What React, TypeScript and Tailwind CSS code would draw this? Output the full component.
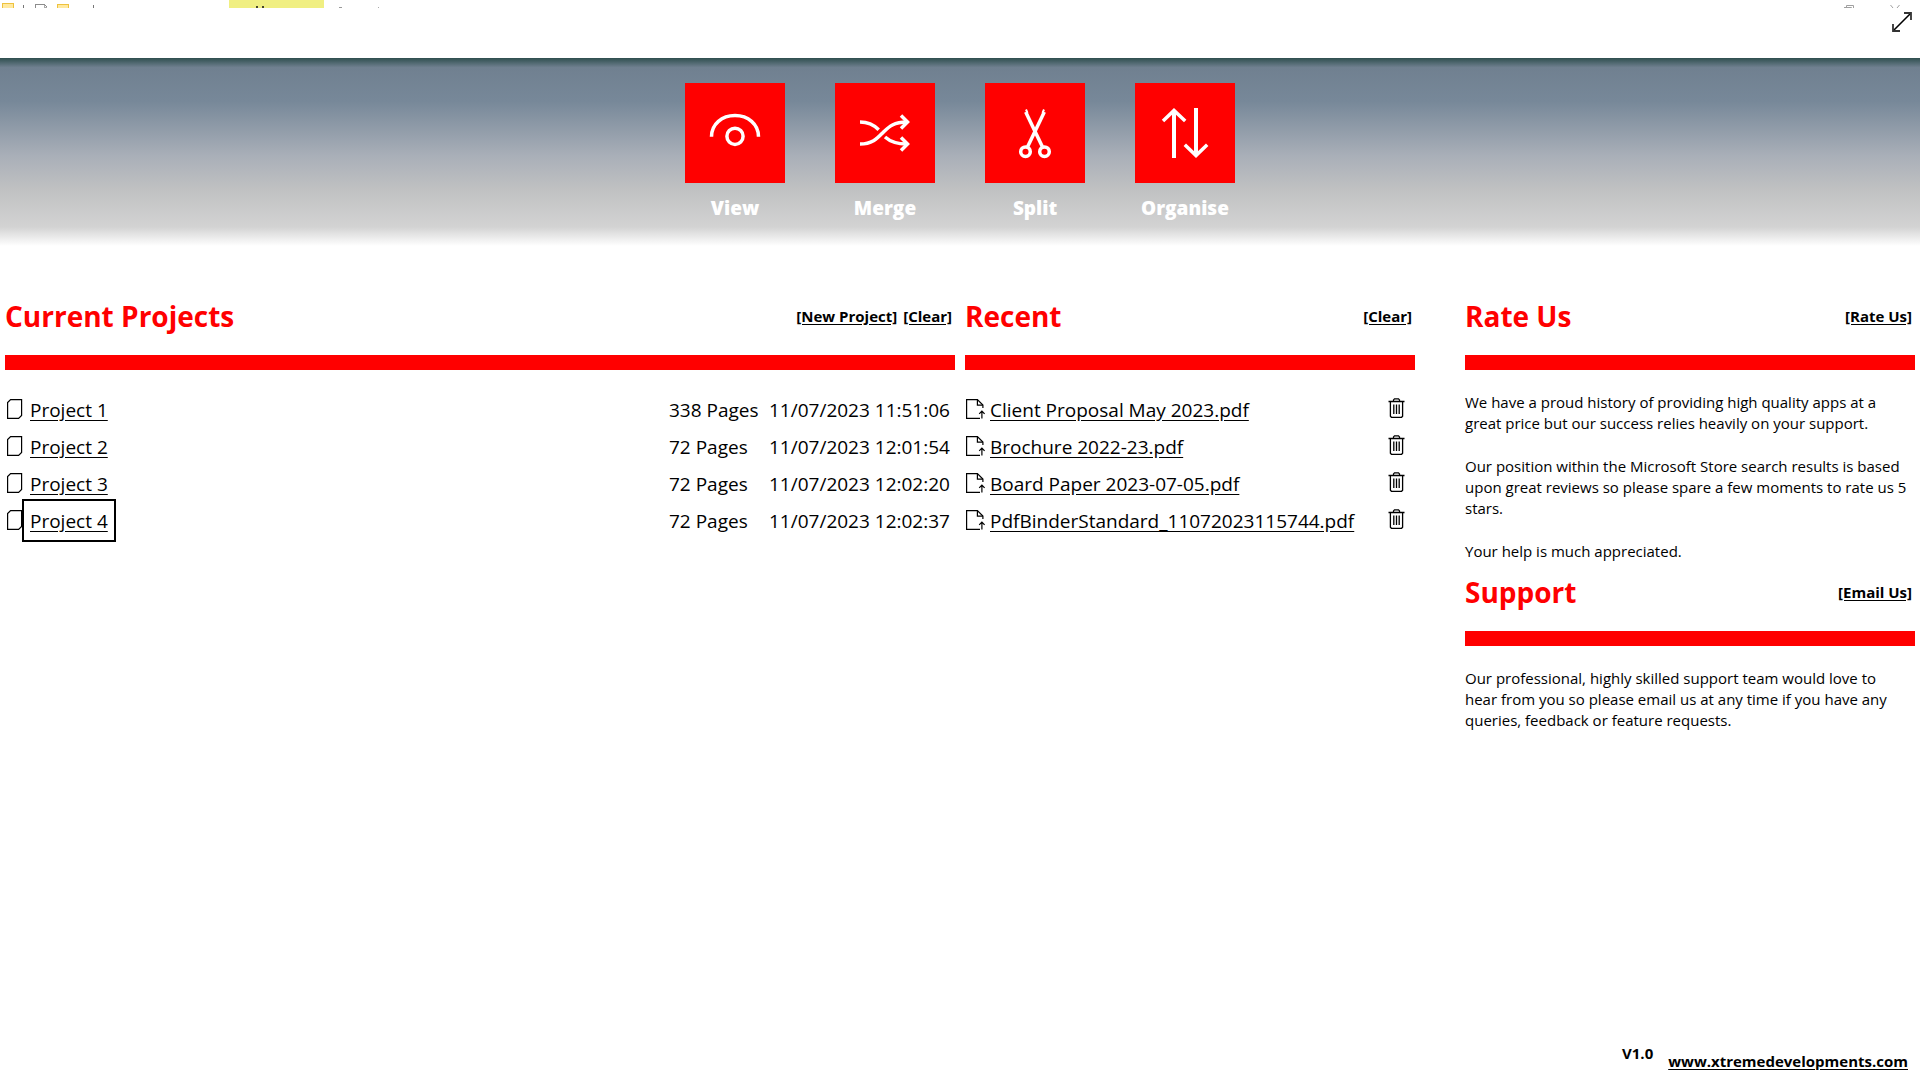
import type { ReactNode } from 'react';

const projects = [
  { name: 'Project 1', pages: 338, date: '11/07/2023 11:51:06' },
  { name: 'Project 2', pages: 72, date: '11/07/2023 12:01:54' },
  { name: 'Project 3', pages: 72, date: '11/07/2023 12:02:20' },
  { name: 'Project 4', pages: 72, date: '11/07/2023 12:02:37' },
];

const recentFiles = [
  'Client Proposal May 2023.pdf',
  'Brochure 2022-23.pdf',
  'Board Paper 2023-07-05.pdf',
  'PdfBinderStandard_11072023115744.pdf',
];

const tools = [
  {
    label: 'View',
    icon: (
      <>
        <path d="M26.5 53.7C26.5 41 37 32.5 50 32.5S73.5 41 73.5 53.7" />
        <circle cx="50" cy="53.3" r="8.1" />
      </>
    ),
  },
  {
    label: 'Merge',
    icon: (
      <>
        <path d="M25 39C33 39 39 42 43.7 46.7" />
        <path d="M25 61C38 61 43 54.5 48.5 49S59 39 72 39" />
        <path d="M50 54C55 58.5 61 61 72 61" />
        <path d="M66 32.5L72.5 39L66 45.5" />
        <path d="M66 54.5L72.5 61L66 67.5" />
      </>
    ),
  },
  {
    label: 'Split',
    icon: (
      <>
        <circle cx="40.5" cy="68.7" r="4.8" />
        <circle cx="59.5" cy="68.7" r="4.8" />
        <path d="M42.5 64L59.3 29" />
        <path d="M57.5 64L40.7 29" />
        <path d="M41 26.5L42.5 30M59 26.5L57.5 30" strokeWidth="2" />
      </>
    ),
  },
  {
    label: 'Organise',
    icon: (
      <>
        <path d="M39 75V27" strokeWidth="4" />
        <path d="M28 38L39 27.5L50.2 38" />
        <path d="M61 25V73" strokeWidth="4" />
        <path d="M49.8 61.8L61 72.5L72.2 61.8" />
      </>
    ),
  },
];

// Sliver of the window's title bar that shows above the page
function TitleStrip() {
  return (
    <div className="flex h-2 justify-between overflow-hidden" aria-hidden="true">
      <svg width="400" height="8" shapeRendering="crispEdges">
        <rect x="2" y="3" width="12" height="5" fill="#ffe9a0" />
        <path d="M2.5 8V3.5H13.5V8" fill="none" stroke="#eec23e" />
        <rect x="23" y="5" width="1" height="3" fill="#777" />
        <path d="M35.5 8V4.5H44.5L46.5 6.5V8" fill="none" stroke="#8c8c8c" />
        <path d="M44.5 4.5V7.5H47" fill="none" stroke="#aaa" />
        <rect x="57" y="4" width="12" height="4" fill="#ffe9a0" />
        <path d="M57.5 8V4.5H68.5V8" fill="none" stroke="#eec23e" />
        <rect x="93" y="5" width="1" height="3" fill="#777" />
        <rect x="229" y="0" width="95" height="8" fill="#f0ef82" />
        <rect x="256" y="6" width="2" height="2" fill="#44432b" />
        <rect x="262" y="6" width="2" height="2" fill="#44432b" />
        <rect x="339" y="7" width="3" height="1" fill="#999" />
        <rect x="378" y="7" width="1" height="1" fill="#aaa" />
      </svg>
      <svg width="80" height="8" fill="none" stroke="#a0a0a0">
        <path d="M4 7.5H11.5V8M6.5 7V5.5H13.5V8" />
        <path d="M50.5 5L53 8M59.5 5L57 8" />
      </svg>
    </div>
  );
}

function ProjectIcon() {
  return (
    <svg className="mb-[2px]" width="16" height="20" viewBox="0 0 16 20" fill="none" stroke="#000" strokeWidth="1.2">
      <path d="M3.6 .6H14.6V16.4L11.6 19.4H.6V3.6Z" />
    </svg>
  );
}

function FileIcon() {
  return (
    <svg className="mb-[2px]" width="20" height="20" viewBox="0 0 20 20" fill="none" stroke="#000" strokeWidth="1.2">
      <path d="M14 19.4H.6V.6H11.4L16.9 6.1V9" />
      <path d="M11.4 .6V6.1H16.9" />
      <path d="M15.9 19.4V12.2M13.2 14.8L15.9 12.1L18.6 14.8" />
    </svg>
  );
}

function TrashIcon() {
  return (
    <svg className="mb-1" width="17" height="20" viewBox="0 0 17 20" fill="none" stroke="#000" strokeWidth="1.3">
      <path d="M.5 3.5H16.5M5.5 3.5V1.9L6.5 .8H10.5L11.5 1.9V3.5" />
      <path d="M2.4 3.5V18.3L3.4 19.3H13.6L14.6 18.3V3.5" />
      <path d="M5.8 6.5V16M8.5 6.5V16M11.2 6.5V16" />
    </svg>
  );
}

function SectionHeader({ title, children }: { title: string; children: ReactNode }) {
  return (
    <>
      <div className="mb-[9px] flex h-[60px] items-center justify-between">
        <h2 className="text-[28px] font-bold text-[#ff0000]">{title}</h2>
        <div className="flex gap-[6px] pr-[3px]">{children}</div>
      </div>
      <div className="h-[15px] bg-[#ff0000]" />
    </>
  );
}

function ActionLink({ children }: { children: ReactNode }) {
  return (
    <a href="#" className="text-[15px] font-bold underline underline-offset-2">
      {children}
    </a>
  );
}

export default function App() {
  return (
    <div className="flex min-h-screen flex-col bg-white font-['Open_Sans',sans-serif] text-black">
      <TitleStrip />
      <div className="flex h-[50px] items-start justify-end pt-1 pr-2">
        <button aria-label="Full screen">
          <svg width="20" height="20" viewBox="0 0 20 20" fill="none" stroke="#333">
            <path d="M1.5 18.5L18.5 1.5" stroke="#000" strokeWidth="1.6" />
            <path d="M12 1H19V8M1 12V19H8" strokeWidth="1.8" />
          </svg>
        </button>
      </div>

      <nav className="flex h-[188px] justify-center gap-[50px] bg-[linear-gradient(to_bottom,#2f4f4f_0%,#708090_5%,#778899_23%,#a9afb8_52%,#c0c1c2_70%,#d3d3d3_90%,#ffffff_100%)] pt-[25px]">
        {tools.map((tool) => (
          <button key={tool.label} className="flex w-[100px] flex-col items-center">
            <span className="block bg-[#ff0000]">
              <svg width="100" height="100" viewBox="0 0 100 100" fill="none" stroke="#fff" strokeWidth="3.5">
                {tool.icon}
              </svg>
            </span>
            <span className="mt-[11px] text-[19px] leading-7 font-extrabold text-white">{tool.label}</span>
          </button>
        ))}
      </nav>

      <main className="flex flex-1 px-[5px] pt-10">
        <section className="mr-[10px] flex-1">
          <SectionHeader title="Current Projects">
            <ActionLink>[New Project]</ActionLink>
            <ActionLink>[Clear]</ActionLink>
          </SectionHeader>
          <table className="mt-[21px] w-full text-[19px] leading-[25px]">
            <tbody>
              {projects.map((project, i) => (
                <tr key={project.name} className="h-[37px]">
                  <td className="p-0">
                    <div className="flex items-center gap-[7px] pl-[2px]">
                      <ProjectIcon />
                      <a
                        href="#"
                        className={
                          i === projects.length - 1
                            ? 'pt-[2px] underline underline-offset-3 outline-2 outline-offset-6 outline-black'
                            : 'pt-[2px] underline underline-offset-3'
                        }
                      >
                        {project.name}
                      </a>
                    </div>
                  </td>
                  <td className="w-[100px] p-0 pt-[2px]">{project.pages} Pages</td>
                  <td className="w-[186px] p-0 pt-[2px]">{project.date}</td>
                </tr>
              ))}
            </tbody>
          </table>
        </section>

        <section className="mr-[50px] w-[450px]">
          <SectionHeader title="Recent">
            <ActionLink>[Clear]</ActionLink>
          </SectionHeader>
          <ul className="mt-[21px] text-[19px] leading-[25px]">
            {recentFiles.map((file) => (
              <li key={file} className="flex h-[37px] items-center pr-[10px] pl-px">
                <FileIcon />
                <a href="#" className="ml-1 pt-[2px] underline underline-offset-3">
                  {file}
                </a>
                <button className="ml-auto" aria-label={`Remove ${file}`}>
                  <TrashIcon />
                </button>
              </li>
            ))}
          </ul>
        </section>

        <aside className="w-[450px]">
          <SectionHeader title="Rate Us">
            <ActionLink>[Rate Us]</ActionLink>
          </SectionHeader>
          <div className="mt-[22px] space-y-[22px] pr-[6px] text-[15px] leading-[21px]">
            <p>
              We have a proud history of providing high quality apps at a great price but our success relies heavily on
              your support.
            </p>
            <p>
              Our position within the Microsoft Store search results is based upon great reviews so please spare a few
              moments to rate us 5 stars.
            </p>
            <p>Your help is much appreciated.</p>
          </div>
          <SectionHeader title="Support">
            <ActionLink>[Email Us]</ActionLink>
          </SectionHeader>
          <p className="mt-[22px] pr-[6px] text-[15px] leading-[21px]">
            Our professional, highly skilled support team would love to hear from you so please email us at any time if
            you have any queries, feedback or feature requests.
          </p>
        </aside>
      </main>

      <footer className="flex justify-end gap-[15px] pr-[12px] pb-2 text-[15px] leading-[21px] font-bold">
        <span className="mb-2">V1.0</span>
        <a href="#" className="mt-2 underline underline-offset-2">
          www.xtremedevelopments.com
        </a>
      </footer>
    </div>
  );
}
